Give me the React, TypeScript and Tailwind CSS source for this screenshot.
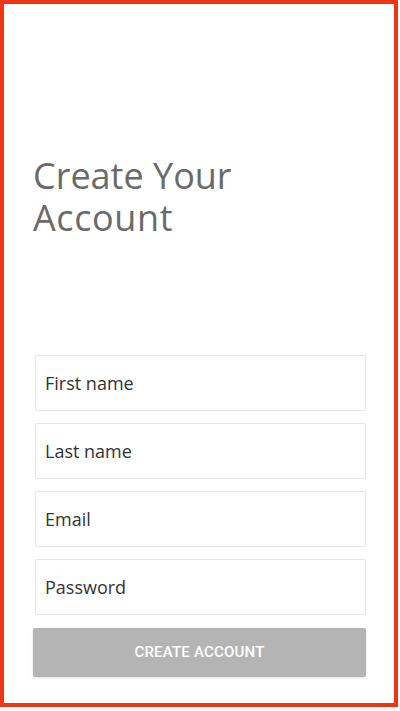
export default function App() {
  const fields = ["First name", "Last name", "Email", "Password"];
  return (
    <div className="w-[400px] h-[711px] bg-white">
      <div className="w-[398px] h-[707px] border-4 border-[#ef3514] flex flex-col pl-[29px] pr-[28px] font-['Open_Sans',sans-serif]">
        <h1 className="mt-[151px] text-[36px] text-[#6a6a6a] font-normal">
          <span className="block leading-[42px]">Create Your</span>
          <span className="block leading-[42px] tracking-[0.6px]">Account</span>
        </h1>
        <div className="mt-[116px] flex flex-col gap-3 pl-[2px]">
          {fields.map((f) => (
            <div
              key={f}
              className="h-[56px] border border-[#e6e6e6] rounded-[2px] flex items-center px-[9px] text-[18px] text-[#333333]"
            >
              {f}
            </div>
          ))}
        </div>
        <button className="mt-[13px] h-[49px] w-full bg-[#b4b4b4] rounded-[2px] shadow-sm text-white text-[15px] font-medium font-['Roboto',sans-serif] tracking-[0.2px]">
          CREATE ACCOUNT
        </button>
      </div>
    </div>
  );
}
